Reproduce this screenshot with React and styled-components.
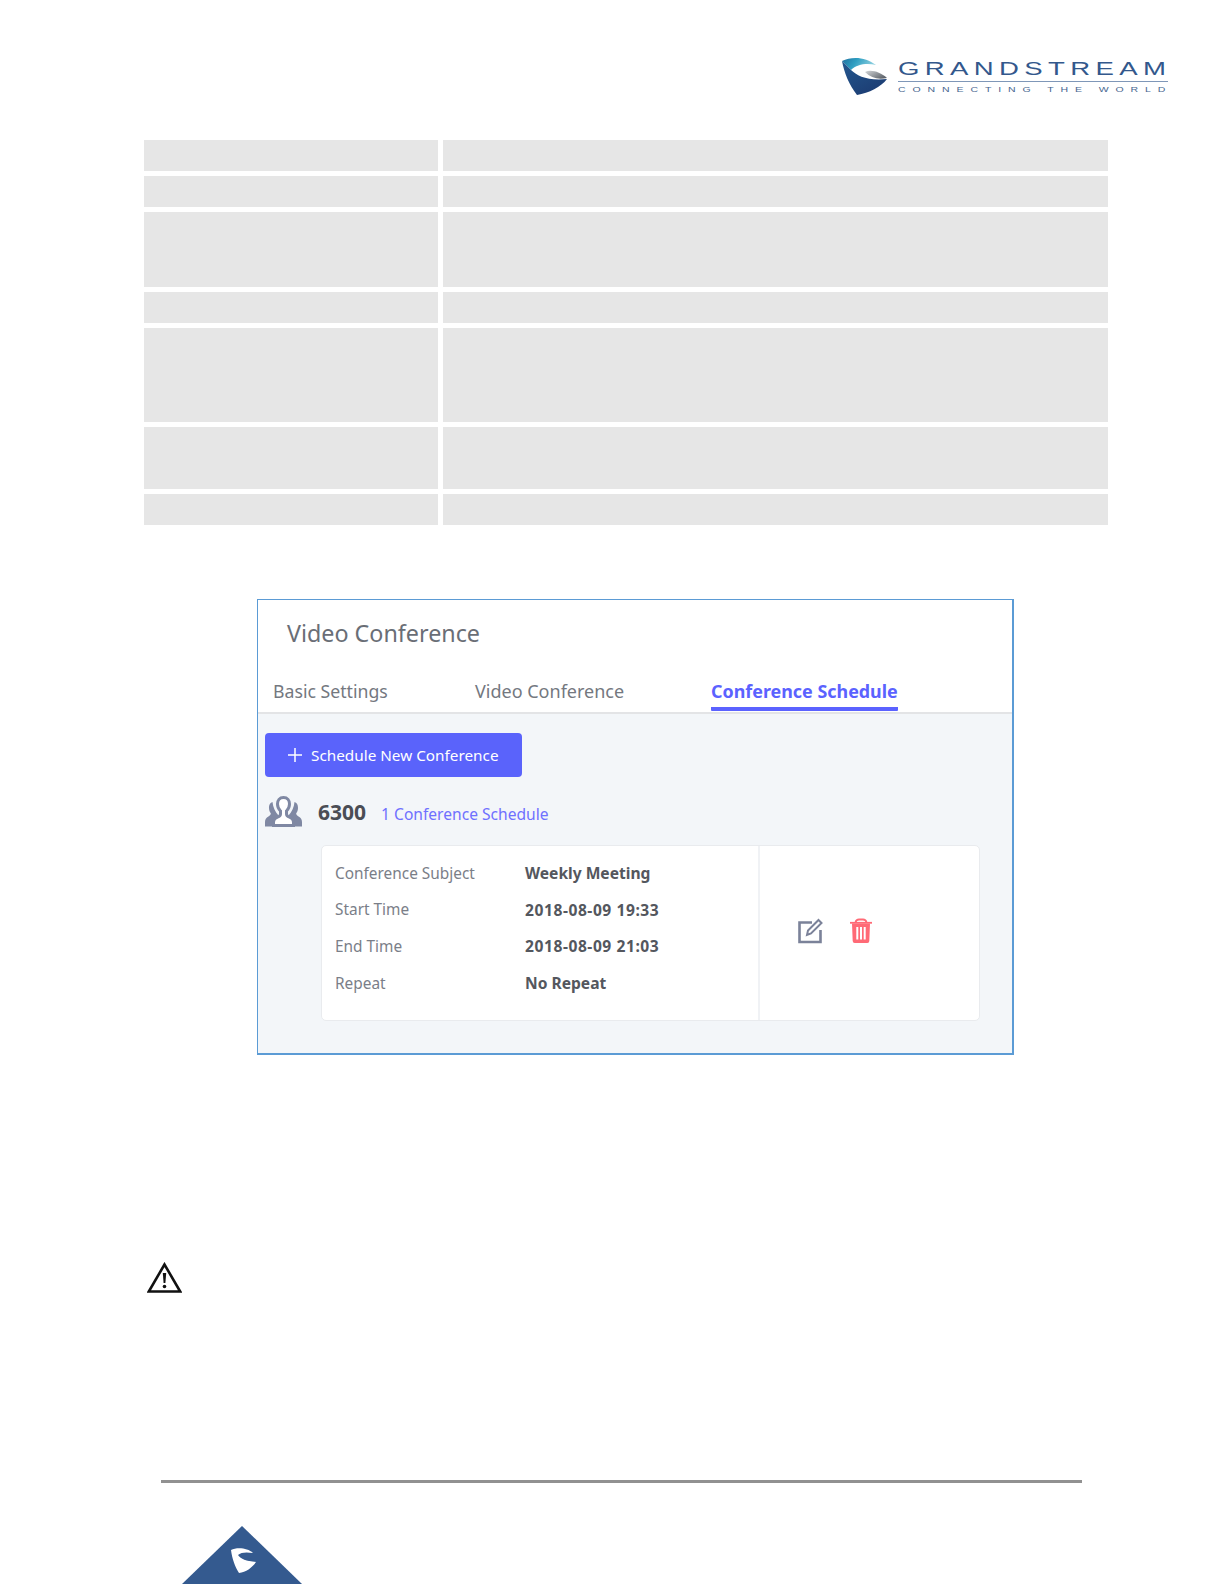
import React from "react";
import styled, { createGlobalStyle } from "styled-components";

const Global = createGlobalStyle`
  html, body { margin: 0; padding: 0; background: #fff; }
  * { box-sizing: border-box; }
`;

const Page = styled.div`
  width: 1224px;
  height: 1584px;
  overflow: hidden;
  background: #fff;
  font-family: "Noto Sans", "Open Sans", sans-serif;
  display: flex;
  flex-direction: column;
`;

const Header = styled.header`
  height: 140px;
  padding: 56px 56px 0 0;
  display: flex;
  justify-content: flex-end;
  align-items: flex-start;
  gap: 11px;
`;

const Wordmark = styled.div`
  width: 270px;
  display: flex;
  flex-direction: column;
  font-family: "Liberation Sans", Arial, sans-serif;
  color: #33588c;
`;

const BrandLine = styled.div`
  height: 26px;
  padding-top: 4px;
  border-bottom: 1px solid #7f97b8;
  white-space: nowrap;
`;

const BrandName = styled.span`
  display: inline-block;
  font-size: 19px;
  line-height: 18px;
  letter-spacing: 3.7px;
  transform: scaleX(1.45);
  transform-origin: left top;
`;

const Tagline = styled.span`
  display: block;
  font-size: 7px;
  line-height: 8px;
  margin-top: 4px;
  letter-spacing: 4.6px;
  white-space: nowrap;
  color: #47668f;
  transform: scaleX(1.5);
  transform-origin: left top;
`;

const Table = styled.div`
  margin-left: 144px;
  width: 964px;
  display: grid;
  grid-template-columns: 294px 665px;
  grid-auto-rows: auto;
  gap: 5px;
`;

const Cell = styled.div`
  background: #e6e6e6;
  height: ${(p) => p.$h}px;
`;

const Frame = styled.section`
  margin: 74px 0 0 257px;
  width: 757px;
  height: 456px;
  border: 1px solid #5b9bd5;
  border-right-width: 2px;
  border-bottom-width: 2px;
  display: flex;
  flex-direction: column;
  background: #f3f6f9;
`;

const TopArea = styled.div`
  height: 114px;
  background: #fff;
  border-bottom: 2px solid #e3e4e6;
  display: flex;
  flex-direction: column;
`;

const Title = styled.h1`
  margin: 0;
  padding: 16px 0 0 29px;
  height: 73px;
  font-size: 23.300px;
  line-height: 34px;
  font-weight: 400;
  color: #6a6e76;
`;

const Tabs = styled.div`
  display: flex;
  padding: 6px 0 0 15px;
  height: 39px;
`;

const Tab = styled.div`
  width: ${(p) => p.$w}px;
  font-size: ${(p) => p.$size}px;
  line-height: 24px;
  white-space: nowrap;
  color: ${(p) => (p.$active ? "#5b62ff" : "#74787f")};
  font-weight: ${(p) => (p.$active ? 700 : 400)};
`;

const TabLabel = styled.span`
  display: inline-block;
  height: 32px;
  ${(p) => p.$active && "border-bottom: 4px solid #5b62ff; border-radius: 1px;"}
`;

const Body = styled.div`
  flex: 1;
  padding: 19px 32px 0 7px;
  display: flex;
  flex-direction: column;
`;

const AddButton = styled.button`
  width: 257px;
  height: 44px;
  border: none;
  border-radius: 4px;
  background: #5a63fb;
  color: #fff;
  font-family: inherit;
  font-size: 15.300px;
  display: flex;
  align-items: center;
  padding: 0 0 0 23px;
  gap: 9px;
  white-space: nowrap;
`;

const GroupRow = styled.div`
  margin-top: 19px;
  display: flex;
  align-items: center;
  height: 32px;
`;

const Extension = styled.span`
  margin-left: 16px;
  font-size: 21px;
  font-weight: 700;
  color: #4a4d55;
`;

const ScheduleLink = styled.span`
  margin-left: 15px;
  padding-top: 3px;
  font-size: 15.600px;
  color: #6f70ff;
`;

const Card = styled.div`
  margin: 17px 0 0 56px;
  width: 659px;
  height: 176px;
  background: #fff;
  border: 1px solid #e9ebee;
  border-radius: 5px;
  display: flex;
`;

const Details = styled.div`
  width: 438px;
  border-right: 2px solid #f0f2f5;
  padding: 9px 0 0 13px;
  display: flex;
  flex-direction: column;
`;

const DetailRow = styled.div`
  display: flex;
  height: 36.600px;
  align-items: center;
  white-space: nowrap;
`;

const Label = styled.span`
  width: 190px;
  font-size: 15.400px;
  color: #7a7e88;
`;

const Value = styled.span`
  font-size: 15.600px;
  font-weight: 700;
  letter-spacing: ${(p) => (p.$numeric ? 0.55 : 0)}px;
  color: #54575e;
`;

const Actions = styled.div`
  flex: 1;
  display: flex;
  align-items: center;
  padding: 0 0 4px 38px;
  gap: 27px;
`;

const WarnWrap = styled.div`
  margin: 207px 0 0 147px;
  height: 31px;
  display: flex;
`;

const FootLine = styled.hr`
  margin: 187px 0 0 161px;
  width: 921px;
  height: 3px;
  border: none;
  background: #919191;
`;

const FootMark = styled.div`
  margin: 43px 0 0 182px;
  width: 120px;
  height: 58px;
  display: flex;
`;

const rows = [31, 31, 75, 31, 94, 62, 31];

const details = [
  ["Conference Subject", "Weekly Meeting", false],
  ["Start Time", "2018-08-09 19:33", true],
  ["End Time", "2018-08-09 21:03", true],
  ["Repeat", "No Repeat", false],
];

const LogoMark = () => (
  <svg width="45" height="40" viewBox="0 0 45 40">
    <defs>
      <linearGradient id="lgA" x1="0" y1="0" x2="1" y2="0.25">
        <stop offset="0" stopColor="#1f6f9e" />
        <stop offset="0.45" stopColor="#2f9fc2" />
        <stop offset="1" stopColor="#8fd0e0" />
      </linearGradient>
      <linearGradient id="lgB" x1="0" y1="0" x2="0.7" y2="1">
        <stop offset="0" stopColor="#24588f" />
        <stop offset="1" stopColor="#1c3c72" />
      </linearGradient>
      <linearGradient id="lgC" x1="0" y1="0" x2="1" y2="0.6">
        <stop offset="0" stopColor="#d5d8da" />
        <stop offset="1" stopColor="#5f646b" />
      </linearGradient>
    </defs>
    <path d="M0 5C10 0 24 1 34 9 25 7 15 8 9 14 6 11 3 8 0 5Z" fill="url(#lgA)" />
    <path d="M0 5C3 8 6 11 9 14 15 20 26 25 45 23 39 31 27 37 15 39 7 29 2 16 0 5Z" fill="url(#lgB)" />
    <path d="M23 16C29 13 38 16 45 22 36 24 29 22 23 16Z" fill="url(#lgC)" />
  </svg>
);

const PeopleIcon = () => (
  <svg width="37" height="32" viewBox="0 0 37 32" fill="#7f88a3">
    <path d="M7.500 6C4.500 7 4 9.500 4 12c0 2.300.7 4 1.800 5.300 0 1.500-.8 2.400-2.400 3.200C1.200 21.600 0 23.500 0 26v4.500h9V26c0-3 1.500-5 4.500-6.500C10 16 8 11 7.500 6z" />
    <path d="M29.500 6C32.500 7 33 9.500 33 12c0 2.300-.7 4-1.800 5.300 0 1.500.8 2.400 2.400 3.200 2.200 1.100 3.400 3 3.400 5.500v4.500h-9V26c0-3-1.500-5-4.500-6.500C27 16 29 11 29.500 6z" />
    <path
      d="M18.500 1.500c-4 0-6 3-6 6.500 0 3 1.200 5.300 3 7v3c0 1.500-1 2.500-3 3.200-2.500 1-4 2.200-4 5.300v3h20v-3c0-3.100-1.500-4.300-4-5.300-2-.7-3-1.700-3-3.200v-3c1.800-1.700 3-4 3-7 0-3.500-2-6.500-6-6.500z"
      fill="#fff"
      stroke="#7f88a3"
      strokeWidth="3"
    />
  </svg>
);

const EditIcon = () => (
  <svg width="25" height="26" viewBox="0 0 25 26" fill="none" stroke="#7b8299">
    <path d="M14 4.500H1.500v19.500h21V12" strokeWidth="2.600" />
    <path d="M9 17l1-4.500L20.500 2l3 3L13 15.500z" strokeWidth="2" fill="#fff" />
  </svg>
);

const TrashIcon = () => (
  <svg width="22" height="26" viewBox="0 0 22 26" fill="none">
    <path d="M0 4.800h22" stroke="#ff6a76" strokeWidth="1.800" />
    <path d="M5.500 4.500C6 2 7.500 1.500 9 1.500h4c1.500 0 3 .5 3.500 3" stroke="#ff6a76" strokeWidth="1.800" />
    <path d="M2 5.500h18l-.7 17.500a2 2 0 0 1-2 2H4.700a2 2 0 0 1-2-2z" fill="#ff6a76" />
    <path d="M7.300 9v12.500M11 9v12.500M14.700 9v12.500" stroke="#fff" strokeWidth="2" />
  </svg>
);

const WarningIcon = () => (
  <svg width="35" height="31" viewBox="0 0 35 31" fill="none">
    <path d="M17.500 2.500L1.800 29.500h31.400z" stroke="#111" strokeWidth="2.600" strokeLinejoin="miter" />
    <path d="M15.800 11h3.400l-.8 10h-1.800z" fill="#111" />
    <circle cx="17.500" cy="24.500" r="1.800" fill="#111" />
  </svg>
);

const FooterMark = () => (
  <svg width="120" height="58" viewBox="0 0 120 58">
    <path d="M60 0L120 58H0z" fill="#345a8f" />
    <path d="M49 24C55 21 66 22 71 27 65 26 59 26 56 29 59 33 64 35 74 36 70 42 64 46 57 47 53 41 50 32 49 24Z" fill="#fff" />
    <path d="M62 33C65 31 69 32 72 35 68 35 65 34 62 33Z" fill="#345a8f" />
  </svg>
);

export default function App() {
  return (
    <Page>
      <Global />
      <Header>
        <LogoMark />
        <Wordmark>
          <BrandLine>
            <BrandName>GRANDSTREAM</BrandName>
          </BrandLine>
          <Tagline>CONNECTING THE WORLD</Tagline>
        </Wordmark>
      </Header>
      <Table>
        {rows.map((h, i) => (
          <React.Fragment key={i}>
            <Cell $h={h} />
            <Cell $h={h} />
          </React.Fragment>
        ))}
      </Table>
      <Frame>
        <TopArea>
          <Title>Video Conference</Title>
          <Tabs>
            <Tab $w={202} $size={17.7}><TabLabel>Basic Settings</TabLabel></Tab>
            <Tab $w={236} $size={18}><TabLabel>Video Conference</TabLabel></Tab>
            <Tab $active $w={190} $size={17.9}><TabLabel $active>Conference Schedule</TabLabel></Tab>
          </Tabs>
        </TopArea>
        <Body>
          <AddButton>
            <svg width="14" height="14" viewBox="0 0 14 14" stroke="#fff" strokeWidth="1.500">
              <path d="M7 0v14M0 7h14" />
            </svg>
            Schedule New Conference
          </AddButton>
          <GroupRow>
            <PeopleIcon />
            <Extension>6300</Extension>
            <ScheduleLink>1 Conference Schedule</ScheduleLink>
          </GroupRow>
          <Card>
            <Details>
              {details.map(([k, v, numeric]) => (
                <DetailRow key={k}>
                  <Label>{k}</Label>
                  <Value $numeric={numeric}>{v}</Value>
                </DetailRow>
              ))}
            </Details>
            <Actions>
              <EditIcon />
              <TrashIcon />
            </Actions>
          </Card>
        </Body>
      </Frame>
      <WarnWrap>
        <WarningIcon />
      </WarnWrap>
      <FootLine />
      <FootMark>
        <FooterMark />
      </FootMark>
    </Page>
  );
}
